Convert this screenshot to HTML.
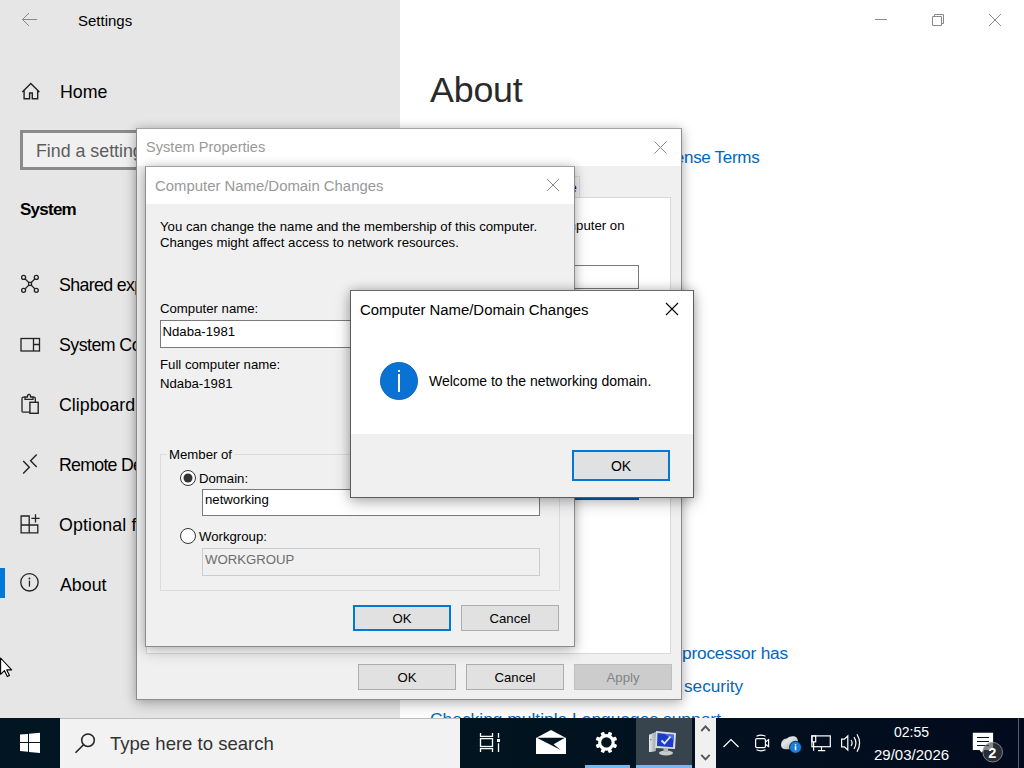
<!DOCTYPE html>
<html><head><meta charset="utf-8">
<style>
*{margin:0;padding:0;box-sizing:border-box}
html,body{width:1024px;height:768px;overflow:hidden;background:#fff;font-family:"Liberation Sans",sans-serif}
.abs{position:absolute}
.t{position:absolute;white-space:nowrap;line-height:1}
#left{position:absolute;left:0;top:0;width:400px;height:718px;background:#e6e6e6}
#right{position:absolute;left:400px;top:0;width:624px;height:718px;background:#fff}
.nav{font-size:17.8px;color:#000}
.win{position:absolute;background:#f0f0f0}
.dlg{font-size:13.2px;color:#000}
.btn{position:absolute;background:#e1e1e1;border:1px solid #adadad;height:26px;width:98px;font-size:13.2px;text-align:center;line-height:26px;color:#000}
.btn.def{border:2px solid #0078d7;line-height:24px}
.tb{position:absolute;background:#fff;border:1px solid #7a7a7a}
</style></head><body>

<!-- ============ SETTINGS WINDOW ============ -->
<div id="left">
  <svg class="abs" style="left:0;top:0" width="136" height="718">
    <path d="M22.5 19.5 H37 M22.5 19.5 L29 13 M22.5 19.5 L29 26" stroke="#8a8a8a" stroke-width="1" fill="none"/>
    <path d="M22.3 92 L30.8 83.6 L39.4 92 M24.1 90.5 V98.8 H29.6 V93 H32.3 V98.8 H37.7 V90.5" stroke="#222" stroke-width="1.4" fill="none"/>
    <!-- shared experiences -->
    <g stroke="#222" stroke-width="1.3" fill="none">
      <circle cx="23.6" cy="277.4" r="2"/><circle cx="36.3" cy="277.4" r="2"/>
      <circle cx="23.6" cy="290.3" r="2"/><circle cx="36.3" cy="290.3" r="2"/>
      <path d="M25.2 279 L28.6 282.4 M34.8 279 L31.4 282.4 M25.2 288.8 L28.6 285.4 M34.8 288.8 L31.4 285.4"/>
      <rect x="28.6" y="282.4" width="2.9" height="3"/>
    </g>
    <!-- system components -->
    <g stroke="#222" stroke-width="1.3" fill="none">
      <rect x="21" y="338.5" width="18.5" height="12.5"/>
      <path d="M33.5 338.5 V351 M33.5 344.5 H39.5"/>
    </g>
    <!-- clipboard -->
    <g stroke="#222" stroke-width="1.3" fill="none">
      <path d="M29.5 412.2 H23.2 Q22 412.2 22 411 V398.4 Q22 397.2 23.2 397.2 H25 M33 397.2 H34.2 Q35.3 397.2 35.3 398.4 V402"/>
      <path d="M25 397 V399.3 H33 V397 H30.6 Q30.6 394.4 29 394.4 Q27.4 394.4 27.4 397 Z"/>
      <rect x="29.9" y="402.3" width="8.3" height="11" stroke-width="1.4"/>
    </g>
    <!-- remote desktop -->
    <g stroke="#222" stroke-width="1.4" fill="none">
      <path d="M23.2 461.1 L29.3 467.2 L23.2 473.4"/>
      <path d="M36.7 454.5 L30.6 460.7 L36.7 466.9"/>
    </g>
    <!-- optional features -->
    <g stroke="#222" stroke-width="1.3" fill="none">
      <path d="M21.1 525 H37.8 V532.8 H21.1 Z M21.1 525 V516 H29.2 V532.8 M35.5 514.3 V522.5 M31.4 518.4 H39.6"/>
    </g>
    <!-- about -->
    <g stroke="#222" stroke-width="1.3" fill="none">
      <circle cx="29.45" cy="582.3" r="8.7"/>
      <path d="M29.45 580.6 V586.6"/>
    </g>
    <circle cx="29.45" cy="578.5" r="0.9" fill="#222"/>
  </svg>
  <div class="t" style="left:78px;top:13px;font-size:15px;color:#000">Settings</div>
  <div class="t nav" style="left:60px;top:84px">Home</div>
  <div class="abs" style="left:20px;top:130px;width:300px;height:40px;border:3px solid #8b8b8b;background:#f0f0f0"></div>
  <div class="t nav" style="left:36px;top:143px;color:#5c5c5c">Find a setting</div>
  <div class="t" style="left:20px;top:201px;font-size:17px;font-weight:bold;letter-spacing:-0.75px;color:#000">System</div>
  <div class="t nav" style="left:59px;top:277px;letter-spacing:-0.65px">Shared experiences</div>
  <div class="t nav" style="left:59px;top:337px;letter-spacing:-0.55px">System Components</div>
  <div class="t nav" style="left:59px;top:397px">Clipboard</div>
  <div class="t nav" style="left:59px;top:457px;letter-spacing:-0.75px">Remote Desktop</div>
  <div class="t nav" style="left:59px;top:517px;letter-spacing:0.15px">Optional features</div>
  <div class="t nav" style="left:60px;top:577px">About</div>
  <div class="abs" style="left:0;top:568px;width:5px;height:30px;background:#0078d7"></div>
</div>
<div id="right">
  <svg class="abs" style="left:0;top:0" width="624" height="60">
    <path d="M475 19.5 H487" stroke="#8a8a8a" stroke-width="1"/>
    <path d="M532.5 16.5 h9 v9 h-9 z M534.5 16.5 v-2 h9 v9 h-2" stroke="#8a8a8a" stroke-width="1" fill="none"/>
    <path d="M589 14 L601 26 M601 14 L589 26" stroke="#8a8a8a" stroke-width="1"/>
  </svg>
  <div class="t" style="left:30px;top:73px;font-size:35.8px;letter-spacing:-0.2px;color:#2a2a2a">About</div>
  <div class="t" style="left:254px;top:149px;font-size:17px;letter-spacing:-0.3px;color:#0067c0">License Terms</div>
  <div class="t" style="left:282px;top:645px;font-size:17.3px;letter-spacing:-0.2px;color:#0067c0">processor has</div>
  <div class="t" style="left:284px;top:678px;font-size:17.2px;color:#0067c0">security</div>
  <div class="t" style="left:30px;top:711px;font-size:17.4px;color:#0067c0">Checking multiple Languages support</div>
</div>

<!-- ============ SYSTEM PROPERTIES ============ -->
<div class="win" style="left:136px;top:128px;width:546px;height:572px;border:1px solid #8c8c8c;border-top-color:#a4a4a4;box-shadow:0 0 9px rgba(0,0,0,0.18),0 5px 14px rgba(0,0,0,0.2)">
  <div class="abs" style="left:0;top:0;width:544px;height:37px;background:#fff"></div>
  <div class="t" style="left:9px;top:11px;font-size:14.6px;color:#999">System Properties</div>
  <svg class="abs" style="left:0;top:0" width="544" height="37">
    <path d="M517.5 12.5 L529.5 24.5 M529.5 12.5 L517.5 24.5" stroke="#8a8a8a" stroke-width="1"/>
  </svg>
  <!-- tab strip remnant -->
  <div class="abs" style="left:420px;top:47px;width:23px;height:22px;border:1px solid #d9d9d9;border-bottom:none;background:#f0f0f0"></div>
  <div class="t dlg" style="left:343px;top:52px">Computer Name</div>
  <div class="abs" style="left:9px;top:68px;width:525px;height:457px;background:#fff;border:1px solid #d9d9d9"></div>
  <div class="t dlg" style="left:390px;top:90px">this computer on</div>
  <div class="abs" style="left:330px;top:136px;width:172px;height:24px;border:1px solid #7a7a7a;background:#fff"></div>
  <div class="abs" style="left:420px;top:345px;width:82px;height:26px;border:2px solid #0063b1;background:#e1e1e1"></div>
  <div class="btn" style="left:221px;top:535px">OK</div>
  <div class="btn" style="left:329px;top:535px">Cancel</div>
  <div class="btn" style="left:437px;top:535px;background:#cccccc;border-color:#bfbfbf;color:#838383">Apply</div>
</div>

<!-- ============ COMPUTER NAME DIALOG ============ -->
<div class="win" style="left:145px;top:166px;width:430px;height:481px;border:1px solid #8c8c8c;border-top-color:#a4a4a4;box-shadow:0 0 9px rgba(0,0,0,0.18),0 5px 14px rgba(0,0,0,0.2)">
  <div class="abs" style="left:0;top:0;width:428px;height:37px;background:#fff"></div>
  <div class="t" style="left:9px;top:12px;font-size:14.9px;color:#999">Computer Name/Domain Changes</div>
  <svg class="abs" style="left:0;top:0" width="428" height="37">
    <path d="M401 12 L413 24 M413 12 L401 24" stroke="#8a8a8a" stroke-width="1"/>
  </svg>
  <div class="t dlg" style="left:14px;top:52px;line-height:16px">You can change the name and the membership of this computer.<br>Changes might affect access to network resources.</div>
  <div class="t dlg" style="left:14px;top:135px">Computer name:</div>
  <div class="tb" style="left:14px;top:153px;width:380px;height:28px"></div>
  <div class="t dlg" style="left:16.5px;top:157.5px">Ndaba-1981</div>
  <div class="t dlg" style="left:14px;top:191px">Full computer name:</div>
  <div class="t dlg" style="left:14px;top:210px">Ndaba-1981</div>
  <!-- group box -->
  <div class="abs" style="left:14px;top:287px;width:400px;height:137px;border:1px solid #dcdcdc"></div>
  <div class="t dlg" style="left:21px;top:281px;background:#f0f0f0;padding:0 2px">Member of</div>
  <svg class="abs" style="left:0;top:0" width="428" height="400">
    <circle cx="42" cy="311" r="7.5" fill="#fff" stroke="#333" stroke-width="1"/>
    <circle cx="42" cy="311" r="4.5" fill="#333"/>
    <circle cx="42" cy="369" r="7.5" fill="#fff" stroke="#333" stroke-width="1"/>
  </svg>
  <div class="t dlg" style="left:53px;top:305px">Domain:</div>
  <div class="tb" style="left:56px;top:322px;width:338px;height:27px"></div>
  <div class="t dlg" style="left:59px;top:326px">networking</div>
  <div class="t dlg" style="left:53px;top:363px">Workgroup:</div>
  <div class="abs" style="left:56px;top:381px;width:338px;height:28px;border:1px solid #cccccc;background:#f0f0f0"></div>
  <div class="t dlg" style="left:59px;top:386px;color:#6d6d6d">WORKGROUP</div>
  <div class="btn def" style="left:207px;top:438px">OK</div>
  <div class="btn" style="left:315px;top:438px">Cancel</div>
</div>

<!-- ============ MESSAGE BOX ============ -->
<div class="win" style="left:350px;top:290px;width:344px;height:208px;border:1px solid #5c5c5c;border-top-color:#6a6a6a;box-shadow:0 0 10px rgba(0,0,0,0.22),0 5px 15px rgba(0,0,0,0.22)">
  <div class="abs" style="left:0;top:0;width:342px;height:143px;background:#fff"></div>
  <div class="t" style="left:9px;top:12px;font-size:14.9px;color:#000">Computer Name/Domain Changes</div>
  <svg class="abs" style="left:0;top:0" width="342" height="143">
    <path d="M315 12 L327 24 M327 12 L315 24" stroke="#000" stroke-width="1.1"/>
    <circle cx="48" cy="90" r="18.6" fill="#0a72d2" stroke="#0a5aa8" stroke-width="0.8"/>
    <rect x="47" y="79" width="2" height="2" fill="#fff"/>
    <rect x="47" y="83" width="2" height="18" fill="#fff"/>
  </svg>
  <div class="t" style="left:78px;top:83px;font-size:14px;color:#000">Welcome to the networking domain.</div>
  <div class="btn def" style="left:221px;top:159px;height:31px;line-height:29px;font-size:14px">OK</div>
</div>

<!-- ============ TASKBAR ============ -->
<div class="abs" style="left:0;top:718px;width:1024px;height:50px;background:linear-gradient(90deg,#011622 0%,#021420 45%,#020b1d 100%)"></div>
<div class="abs" style="left:60px;top:718px;width:400px;height:50px;background:#f2f2f2;border-top:1px solid #bdbdbd"></div>
<svg class="abs" style="left:0;top:718px" width="1024" height="50">
  <!-- windows logo -->
  <path d="M20 16.6 L28 15.9 V24.1 H20 Z M29 15.8 L40 14.8 V24.1 H29 Z M20 25 H28 V33.8 L20 32.9 Z M29 25 H40 V35.1 L29 33.9 Z" fill="#fff"/>
  <!-- search -->
  <circle cx="88" cy="22.2" r="6.3" stroke="#222" stroke-width="1.5" fill="none"/>
  <path d="M83.5 26.7 L75.5 34.7" stroke="#222" stroke-width="1.6"/>
</svg>
<div class="t" style="left:110px;top:735px;font-size:18.55px;color:#333">Type here to search</div>
<!-- running app buttons -->
<div class="abs" style="left:636px;top:718px;width:56px;height:50px;background:#37444e"></div>
<div class="abs" style="left:585px;top:765px;width:45px;height:3px;background:#76b9ed"></div>
<div class="abs" style="left:636px;top:765px;width:56px;height:3px;background:#76b9ed"></div>
<div class="abs" style="left:695px;top:718px;width:21px;height:50px;background:#f0f0f0"></div>
<div class="abs" style="left:1018px;top:718px;width:1px;height:50px;background:#5a6068"></div>
<svg class="abs" style="left:0;top:718px" width="1024" height="50">
  <!-- task view -->
  <g stroke="#fff" stroke-width="1.3" fill="none">
    <path d="M480.5 15 V18.3 H492.5 V15"/>
    <rect x="480.5" y="20.6" width="12" height="7.9"/>
    <path d="M480.5 34 V30.6 H492.5 V34"/>
    <path d="M498.5 15 V19.8 M498.5 25.2 V34"/>
  </g>
  <rect x="497" y="21" width="3" height="3" fill="#fff"/>
  <!-- mail -->
  <path d="M536 20 L551 12 L566 20 V36 H536 Z" fill="#fff"/>
  <path d="M536.8 19.8 H565 L553.6 26.3 L560.8 32 Z" fill="#021420"/>
  <!-- gear -->
  <g transform="translate(606.4,24.4)">
    <circle r="8.3" fill="#fff"/>
    <g fill="#fff"><rect x="-1.9" y="-10.9" width="3.8" height="5" rx="0.9" transform="rotate(22.5)"/><rect x="-1.9" y="-10.9" width="3.8" height="5" rx="0.9" transform="rotate(67.5)"/><rect x="-1.9" y="-10.9" width="3.8" height="5" rx="0.9" transform="rotate(112.5)"/><rect x="-1.9" y="-10.9" width="3.8" height="5" rx="0.9" transform="rotate(157.5)"/><rect x="-1.9" y="-10.9" width="3.8" height="5" rx="0.9" transform="rotate(202.5)"/><rect x="-1.9" y="-10.9" width="3.8" height="5" rx="0.9" transform="rotate(247.5)"/><rect x="-1.9" y="-10.9" width="3.8" height="5" rx="0.9" transform="rotate(292.5)"/><rect x="-1.9" y="-10.9" width="3.8" height="5" rx="0.9" transform="rotate(337.5)"/></g>
    <circle r="5.2" fill="#021420"/>
  </g>
  <!-- system properties icon -->
  <g>
    <path d="M649 17 L656 14 V33 L649 34 Z" fill="#c9ccd0"/>
    <path d="M649 17 L656 14 V33 L649 34 Z" fill="url(#gcase)"/>
    <rect x="650" y="21" width="1.5" height="1.2" fill="#4caf50"/>
    <path d="M656 13 L676 15 L675 31 L655 30 Z" fill="#d9dde2"/>
    <path d="M657.5 15 L674 16.8 L673 29.2 L657 28 Z" fill="#1a3cc8"/>
    <path d="M664 15.7 L674 16.8 L673.5 22 Z" fill="#4f78f0" opacity="0.8"/>
    <path d="M661.5 22.5 L664.5 25.5 L670.5 18.5" stroke="#e8e8f0" stroke-width="1.8" fill="none"/>
    <ellipse cx="666" cy="35" rx="7" ry="2.6" fill="#c8cbce"/>
    <path d="M663.5 30 H668 V34 H663.5 Z" fill="#b5b8bb"/>
  </g>
  <defs><linearGradient id="gcase" x1="0" x2="1"><stop offset="0" stop-color="#e8eaec"/><stop offset="1" stop-color="#9ea3a8"/></linearGradient></defs>
  <!-- scroll carets -->
  <path d="M701.3 13 L705.5 8.4 L709.7 13" stroke="#555" stroke-width="1.9" fill="none"/>
  <path d="M701.3 36.8 L705.5 41.4 L709.7 36.8" stroke="#555" stroke-width="1.9" fill="none"/>
  <!-- tray caret -->
  <path d="M723.5 29 L731 21.5 L738.5 29" stroke="#fff" stroke-width="1.2" fill="none"/>
  <!-- meet now -->
  <g stroke="#fff" stroke-width="1.2" fill="none">
    <rect x="755.6" y="20.6" width="9.8" height="9" rx="1.3"/>
    <path d="M765.4 24 L768.6 21.6 V28.6 L765.4 26.2"/>
    <path d="M756.5 18.2 Q761 16.2 765.5 18.2"/>
    <path d="M756.5 31.8 Q761 33.8 765.5 31.8"/>
  </g>
  <!-- onedrive -->
  <defs><linearGradient id="gcl" x1="0" y1="0" x2="1" y2="1"><stop offset="0" stop-color="#9a9ea3"/><stop offset="0.35" stop-color="#e6e6e6"/><stop offset="1" stop-color="#9da1a6"/></linearGradient></defs>
  <path d="M781 26.5 Q781.5 21 786.5 20.5 Q790 17.8 794 18.3 Q797.5 19 798 23 Q796 31 790 31.2 H785 Q781 31 781 26.5 Z" fill="url(#gcl)"/>
  <circle cx="795.5" cy="29.3" r="6" fill="#1a7fd9" stroke="#021420" stroke-width="0.8"/>
  <rect x="794.8" y="28.2" width="1.5" height="4" fill="#fff"/>
  <rect x="794.8" y="26.2" width="1.5" height="1.2" fill="#fff"/>
  <!-- network -->
  <g stroke="#fff" stroke-width="1.2" fill="none">
    <rect x="811.9" y="17.9" width="18.4" height="10.8"/>
    <rect x="811.9" y="17.9" width="3.8" height="5.9"/>
    <path d="M813.6 23.8 V32.8 M821.5 28.7 V32.5 M818 32.6 H825.2"/>
  </g>
  <!-- volume -->
  <g stroke="#fff" stroke-width="1.2" fill="none">
    <path d="M841.6 21.2 H844.4 L847.8 18 V32 L844.4 28.8 H841.6 Z"/>
    <path d="M851 22 Q853.2 25 851 28"/>
    <path d="M854 19.2 Q857.8 25 854 30.8"/>
    <path d="M857 16.2 Q862.2 25 857 33.8"/>
  </g>
  <!-- notification -->
  <path d="M972.8 14.8 H993.1 V32 H984 L981.5 34.5 L979.5 32 H972.8 Z" fill="#fff"/>
  <path d="M977 19.5 H989 M977 23.5 H989 M977 27.5 H989" stroke="#021420" stroke-width="1"/>
  <circle cx="992.7" cy="34.2" r="9.8" fill="rgba(66,66,70,0.62)" stroke="#8d8d8d" stroke-width="0.9"/>
</svg>
<div class="t" style="left:894px;top:725px;font-size:14px;color:#fff">02:55</div>
<div class="t" style="left:874px;top:746.6px;font-size:15px;color:#fff">29/03/2026</div>
<div class="t" style="left:988.3px;top:745.5px;font-size:14.5px;font-weight:bold;color:#fff">2</div>
<svg class="abs" style="left:0;top:650px" width="20" height="30">
  <path d="M0.6 8 V24.3 L4.4 20.6 L7.3 26.6 L9.5 25.6 L6.7 19.9 L11.6 19.9 Z" fill="#fff" stroke="#000" stroke-width="1.1" stroke-linejoin="round"/>
</svg>
</body></html>
